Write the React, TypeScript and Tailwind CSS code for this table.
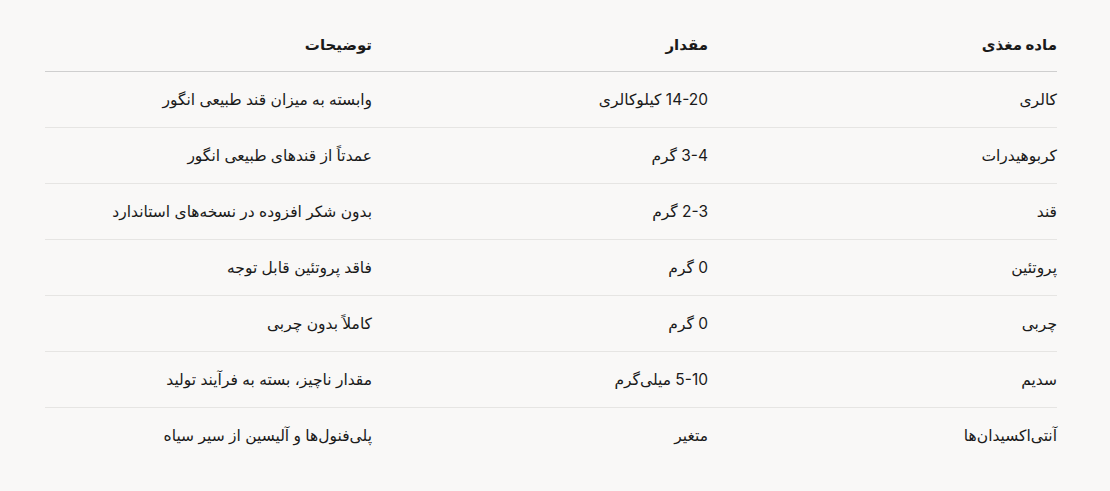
import React from "react";

const rows: [string, string, string][] = [
  ["کالری", "14-20 کیلوکالری", "وابسته به میزان قند طبیعی انگور"],
  ["کربوهیدرات", "3-4 گرم", "عمدتاً از قندهای طبیعی انگور"],
  ["قند", "2-3 گرم", "بدون شکر افزوده در نسخه‌های استاندارد"],
  ["پروتئین", "0 گرم", "فاقد پروتئین قابل توجه"],
  ["چربی", "0 گرم", "کاملاً بدون چربی"],
  ["سدیم", "5-10 میلی‌گرم", "مقدار ناچیز، بسته به فرآیند تولید"],
  ["آنتی‌اکسیدان‌ها", "متغیر", "پلی‌فنول‌ها و آلیسین از سیر سیاه"],
];

export default function App() {
  return (
    <div
      dir="rtl"
      className="min-h-[491px] w-full bg-[#f9f8f7] pl-[45px] pr-[53px] pt-[33px] text-[#1a1a1a]"
      style={{ fontFamily: "Inter, 'DejaVu Sans', sans-serif" }}
    >
      <div className="grid grid-cols-[349px_336px_327px] border-b border-[#cfcfcf] pb-[15px] text-[15px] font-bold leading-[23px]">
        <div>ماده مغذی</div>
        <div>مقدار</div>
        <div>توضیحات</div>
      </div>
      {rows.map((r, i) => (
        <div
          key={i}
          className={`grid grid-cols-[349px_336px_327px] text-[15.5px] leading-[23px] py-[16px] ${
            i < rows.length - 1 ? "border-b border-[#e6e5e3]" : ""
          }`}
        >
          <div>{r[0]}</div>
          <div>{r[1]}</div>
          <div>{r[2]}</div>
        </div>
      ))}
    </div>
  );
}
